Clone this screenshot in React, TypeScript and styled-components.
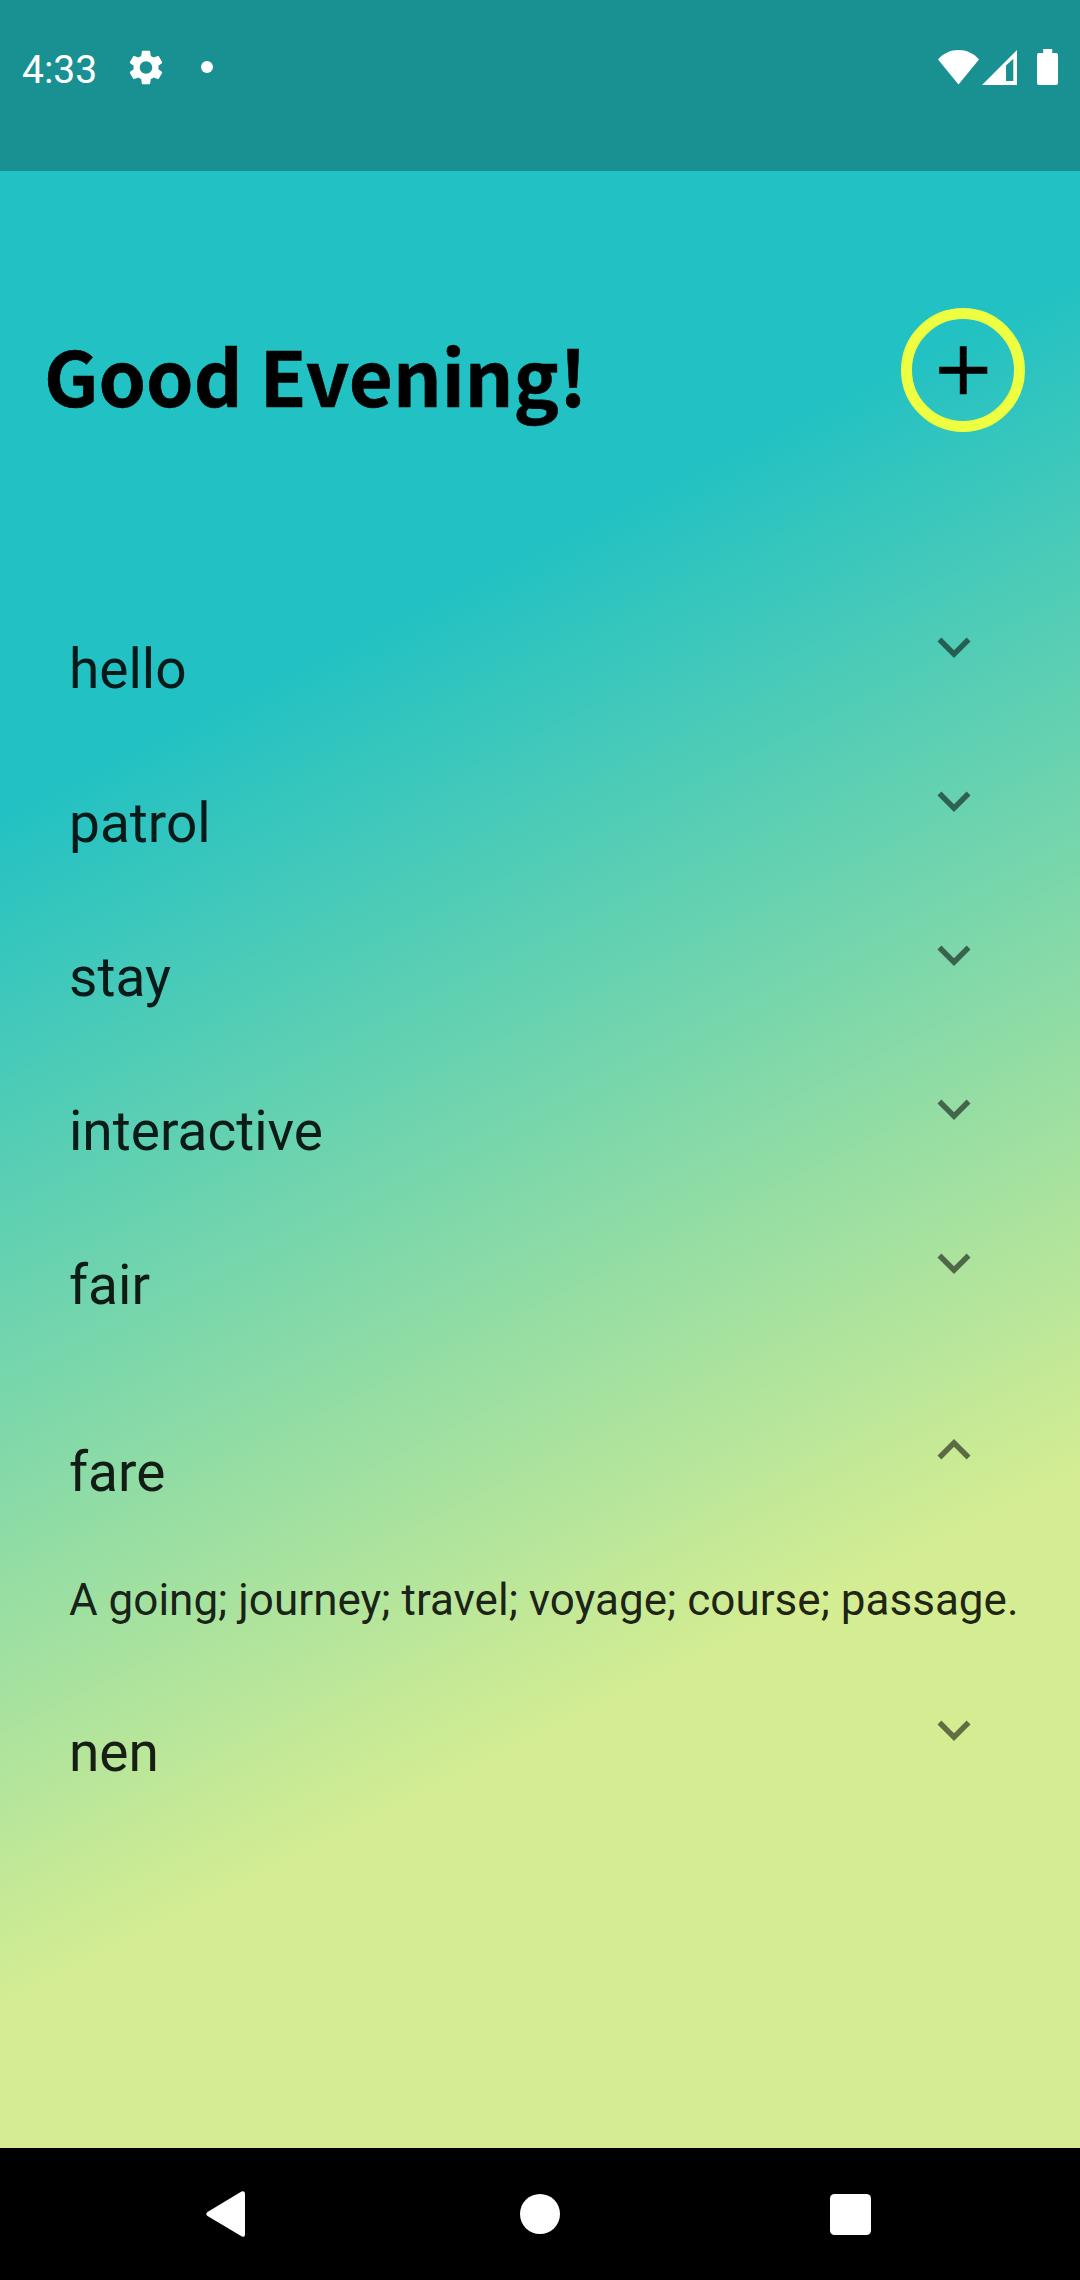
import React, { useState } from 'react';
import styled, { createGlobalStyle } from 'styled-components';

const GlobalStyle = createGlobalStyle`
  * { box-sizing: border-box; }
  body { margin: 0; background: #000; }
`;

const Screen = styled.div`
  display: flex;
  flex-direction: column;
  width: 1080px;
  height: 2280px;
  overflow: hidden;
  font-family: Roboto, "Noto Sans", sans-serif;
`;

const Body = styled.div`
  flex: 1;
  display: flex;
  flex-direction: column;
  background: linear-gradient(153.5deg, #22c1c3 30.2%, #d5ed92 75%);
`;

const StatusBar = styled.header`
  display: flex;
  align-items: flex-start;
  justify-content: space-between;
  height: 171px;
  padding: 44px 22px 0 22px;
  background: rgba(0, 0, 0, 0.25);
  color: #fff;
`;

const StatusGroup = styled.div`
  display: flex;
  align-items: center;
  height: 46px;
`;

const Clock = styled.span`
  width: 74px;
  margin-right: 33px;
  padding-top: 5px;
  font-size: 39px;
  line-height: 46px;
  white-space: nowrap;
`;

const Dot = styled.span`
  width: 12px;
  height: 12px;
  margin-left: 38px;
  border-radius: 50%;
  background: #fff;
`;

const Icon = styled.svg<{ $left?: number }>`
  display: block;
  flex: none;
  margin-left: ${(p) => p.$left ?? 0}px;
`;

const TitleBar = styled.div`
  display: flex;
  align-items: flex-start;
  justify-content: space-between;
  height: 399px;
  padding: 137px 55px 0 44px;
`;

const Title = styled.h1`
  margin: 0;
  padding-top: 6px;
  font-family: "Noto Sans CJK JP", "Noto Sans", sans-serif;
  font-size: 76px;
  font-weight: 700;
  line-height: 120px;
  color: #000;
  -webkit-text-stroke: 0.6px #000;
  white-space: nowrap;
`;

const AddButton = styled.button`
  display: flex;
  align-items: center;
  justify-content: center;
  width: 124px;
  height: 124px;
  padding: 0;
  border: 11px solid #eeff41;
  border-radius: 50%;
  background: transparent;
`;

const WordList = styled.main`
  display: flex;
  flex-direction: column;
`;

const WordItem = styled.section<{ $open: boolean }>`
  padding: ${(p) => (p.$open ? '33px 0 0' : '0')};
`;

const WordHeader = styled.div`
  display: flex;
  align-items: center;
  justify-content: space-between;
  height: 154px;
  padding: 0 93px 0 69px;
`;

const Word = styled.span`
  padding-top: 44px;
  font-size: 55px;
  line-height: 64px;
  color: rgba(0, 0, 0, 0.87);
`;

const Meaning = styled.p`
  height: 126px;
  margin: 0;
  padding: 47px 0 0 69px;
  font-size: 44px;
  line-height: 52px;
  color: rgba(0, 0, 0, 0.87);
  white-space: nowrap;
`;

const NavBar = styled.footer`
  display: flex;
  align-items: center;
  justify-content: space-between;
  height: 132px;
  padding: 0 209px 0 206px;
  background: #000;
`;

const words = [
  { word: 'hello' },
  { word: 'patrol' },
  { word: 'stay' },
  { word: 'interactive' },
  { word: 'fair' },
  { word: 'fare', meaning: 'A going; journey; travel; voyage; course; passage.' },
  { word: 'nen' },
];

function Chevron({ open }: { open: boolean }) {
  return (
    <Icon width="66" height="66" viewBox="0 0 24 24" fill="#000" fillOpacity="0.54">
      <path
        d={
          open
            ? 'M12 8l-6 6 1.41 1.41L12 10.83l4.59 4.58L18 14z'
            : 'M16.59 8.59L12 13.17 7.41 8.59 6 10l6 6 6-6z'
        }
      />
    </Icon>
  );
}

export default function App() {
  const [openWord, setOpenWord] = useState('fare');
  return (
    <>
      <GlobalStyle />
      <Screen>
        <Body>
          <StatusBar>
            <StatusGroup>
              <Clock>4:33</Clock>
              <Icon width="34" height="35" viewBox="2.2 2 19.6 20" fill="#fff">
                <path d="M19.14 12.94c.04-.3.06-.61.06-.94 0-.32-.02-.64-.07-.94l2.03-1.58c.18-.14.23-.41.12-.61l-1.92-3.32c-.12-.22-.37-.29-.59-.22l-2.39.96c-.5-.38-1.03-.7-1.62-.94l-.36-2.54c-.04-.24-.24-.41-.48-.41h-3.84c-.24 0-.43.17-.47.41l-.36 2.54c-.59.24-1.13.57-1.62.94l-2.39-.96c-.22-.08-.47 0-.59.22L2.74 8.87c-.12.21-.08.47.12.61l2.03 1.58c-.05.3-.09.63-.09.94s.02.64.07.94l-2.03 1.58c-.18.14-.23.41-.12.61l1.92 3.32c.12.22.37.29.59.22l2.39-.96c.5.38 1.03.7 1.62.94l.36 2.54c.05.24.24.41.48.41h3.84c.24 0 .44-.17.47-.41l.36-2.54c.59-.24 1.13-.56 1.62-.94l2.39.96c.22.08.47 0 .59-.22l1.92-3.32c.12-.22.07-.47-.12-.61l-2.01-1.58zM12 15.6c-1.98 0-3.6-1.62-3.6-3.6s1.62-3.6 3.6-3.6 3.6 1.62 3.6 3.6-1.62 3.6-3.6 3.6z" />
              </Icon>
              <Dot />
            </StatusGroup>
            <StatusGroup>
              <Icon width="41" height="35" viewBox="0 0 41 35" fill="#fff">
                <path d="M0 9.5C5.500 3.200 12.500 0 20.500 0S35.500 3.200 41 9.500L20.500 34.500Z" />
              </Icon>
              <Icon $left={3} width="35" height="35" viewBox="0 0 35 35" fill="#fff" fillRule="evenodd">
                <path d="M0 35L35 0V35ZM24 15.500V31H31.300V8.800Z" />
              </Icon>
              <Icon $left={20} width="21" height="36" viewBox="0 0 21 36" fill="#fff">
                <path d="M6.200 0H15.200V4H19Q21 4 21 6V34Q21 36 19 36H2Q0 36 0 34V6Q0 4 2 4H6.200Z" />
              </Icon>
            </StatusGroup>
          </StatusBar>
          <TitleBar>
            <Title>Good Evening!</Title>
            <AddButton aria-label="Add word">
              <Icon width="82.5" height="82.5" viewBox="0 0 24 24">
                <path d="M19 13h-6v6h-2v-6H5v-2h6V5h2v6h6v2z" />
              </Icon>
            </AddButton>
          </TitleBar>
          <WordList>
            {words.map(({ word, meaning }) => {
              const open = word === openWord;
              return (
                <WordItem key={word} $open={open}>
                  <WordHeader onClick={() => setOpenWord(open ? '' : word)}>
                    <Word>{word}</Word>
                    <Chevron open={open} />
                  </WordHeader>
                  {open && <Meaning>{meaning}</Meaning>}
                </WordItem>
              );
            })}
          </WordList>
        </Body>
        <NavBar>
          <Icon width="39" height="46" viewBox="0 0 39 46" fill="#fff">
            <path d="M35.500 .6Q39 -1 39 2.800V43.200Q39 47 35.500 45.200L1.500 25Q-1 23 1.500 21Z" />
          </Icon>
          <Icon $left={5} width="40" height="40" viewBox="0 0 40 40" fill="#fff">
            <circle cx="20" cy="20" r="20" />
          </Icon>
          <Icon width="41" height="41" viewBox="0 0 41 41" fill="#fff">
            <rect width="41" height="41" rx="4.500" />
          </Icon>
        </NavBar>
      </Screen>
    </>
  );
}
